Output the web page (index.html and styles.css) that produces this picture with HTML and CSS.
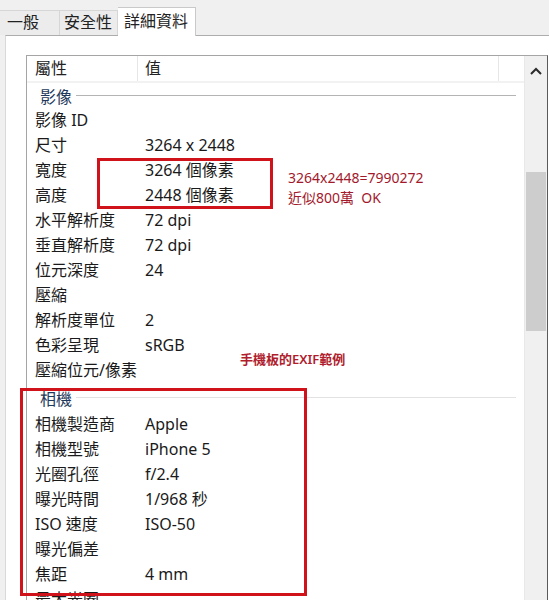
FILE: index.html
```html
<!DOCTYPE html>
<html lang="zh-Hant">

<head>
    <meta charset="UTF-8">
    <meta name="viewport" content="width=device-width, initial-scale=1.0">
    <title>內容</title>
    <link rel="stylesheet" href="styles.css">
</head>

<body>

    <!-- 分頁 -->
    <div class="tabs">
        <div class="tab">一般</div>
        <div class="tab">安全性</div>
        <div class="tab active">詳細資料</div>
    </div>

    <div class="panel">
        <div class="list">
            <div class="list-body">
                <div class="head">
                    <div class="head-key">屬性</div>
                    <div class="head-val">值</div>
                    <div class="head-rest"></div>
                </div>

                <div class="group"><span>影像</span><i></i></div>
                <div class="row"><span class="key">影像 ID</span><span class="val"></span></div>
                <div class="row"><span class="key">尺寸</span><span class="val">3264 x 2448</span></div>
                <div class="row"><span class="key">寬度</span><span class="val">3264 個像素</span></div>
                <div class="row"><span class="key">高度</span><span class="val">2448 個像素</span></div>
                <div class="row"><span class="key">水平解析度</span><span class="val">72 dpi</span></div>
                <div class="row"><span class="key">垂直解析度</span><span class="val">72 dpi</span></div>
                <div class="row"><span class="key">位元深度</span><span class="val">24</span></div>
                <div class="row"><span class="key">壓縮</span><span class="val"></span></div>
                <div class="row"><span class="key">解析度單位</span><span class="val">2</span></div>
                <div class="row"><span class="key">色彩呈現</span><span class="val">sRGB</span></div>
                <div class="row"><span class="key">壓縮位元/像素</span><span class="val"></span></div>

                <div class="group group-tall"><span>相機</span><i></i></div>
                <div class="row"><span class="key">相機製造商</span><span class="val">Apple</span></div>
                <div class="row"><span class="key">相機型號</span><span class="val">iPhone 5</span></div>
                <div class="row"><span class="key">光圈孔徑</span><span class="val">f/2.4</span></div>
                <div class="row"><span class="key">曝光時間</span><span class="val">1/968 秒</span></div>
                <div class="row"><span class="key">ISO 速度</span><span class="val">ISO-50</span></div>
                <div class="row"><span class="key">曝光偏差</span><span class="val"></span></div>
                <div class="row"><span class="key">焦距</span><span class="val">4 mm</span></div>
                <div class="row"><span class="key">最大光圈</span><span class="val"></span></div>
            </div>

            <div class="scrollbar">
                <div class="arrow">
                    <svg width="12" height="8" viewBox="0 0 12 8"><path d="M1 7 L6 2 L11 7" fill="none" stroke="#2b2b2b" stroke-width="2"/></svg>
                </div>
                <div class="thumb"></div>
            </div>
        </div>
    </div>

    <!-- 註解 -->
    <div class="mark mark-size"></div>
    <div class="mark mark-camera"></div>
    <div class="note note-size">3264x2448=7990272<br>近似800萬&nbsp;&nbsp;OK</div>
    <div class="note note-exif">手機板的EXIF範例</div>

</body>

</html>
```

FILE: styles.css
```css
* {
    box-sizing: border-box;
}

body {
    margin: 0;
    height: 600px;
    overflow: hidden;
    background-color: #f0f0f0;
    font-family: "Noto Sans", "Noto Sans CJK TC", sans-serif;
    font-size: 16px;
    color: #1a1a1a;
}

/* 分頁 */
.tabs {
    display: flex;
    align-items: flex-end;
    height: 35px;
    position: relative;
    z-index: 2;
}

.tab {
    height: 25px;
    line-height: 22px;
    padding: 0 7px;
    background-color: #ececec;
    border: 1px solid #d6d6d6;
    border-bottom: none;
    color: #222;
    white-space: nowrap;
}

.tab:first-child {
    width: 60px;
    padding-left: 7px;
    border-left: none;
}

.tab:nth-child(2) {
    width: 58px;
    padding-left: 4px;
    padding-right: 0;
    border-left: none;
}

.tab.active {
    width: 78px;
    height: 29px;
    line-height: 26px;
    padding-left: 6px;
    padding-right: 0;
    background-color: #fff;
    border-color: #c9c9c9;
    border-left: none;
    margin-bottom: -1px;
}

.panel {
    margin-left: 5px;
    height: 565px;
    background-color: #fff;
    border-top: 1px solid #adadad;
    border-left: 1px solid #d9d9d9;
    padding: 19px 0 0 20px;
}

.list {
    display: flex;
    width: 522px;
    height: 560px;
    border-top: 1px solid #a5a5a5;
    border-left: 1px solid #a5a5a5;
    border-right: 1px solid #5a5a5a;
}

.list-body {
    flex: 1;
}

.head {
    display: flex;
    height: 27px;
    line-height: 25px;
    border-bottom: 2px solid #f2f2f2;
    color: #222;
}

.head-key {
    width: 111px;
    padding-left: 8px;
    border-right: 1px solid #e6e6e6;
}

.head-val {
    width: 361px;
    padding-left: 7px;
    border-right: 1px solid #e6e6e6;
}

.group {
    display: flex;
    align-items: center;
    height: 25px;
    padding: 0 8px 0 13px;
    color: #1e395b;
}

.group-tall {
    height: 29px;
}

.group i {
    flex: 1;
    height: 1px;
    margin-left: 4px;
    background-color: #b4b4b4;
    max-width: 441px;
}

.group-tall i {
    background-color: #e2e2e2;
}

.row {
    display: flex;
    height: 25px;
    line-height: 25px;
    padding-left: 8px;
}

.key {
    width: 110px;
    white-space: nowrap;
}

/* 捲軸 */
.scrollbar {
    width: 23px;
    background-color: #f0f0f0;
    border-left: 1px solid #e8e8e8;
}

.arrow {
    height: 29px;
    display: flex;
    justify-content: center;
    padding-top: 11px;
}

.thumb {
    margin: 87px 1px 0 1px;
    height: 159px;
    background-color: #cdcdcd;
}

/* 紅框與說明 */
.mark {
    position: absolute;
    border: 3px solid #d0121b;
}

.mark-size {
    left: 97px;
    top: 158px;
    width: 176px;
    height: 51px;
}

.mark-camera {
    left: 20px;
    top: 388px;
    width: 287px;
    height: 208px;
}

.note {
    position: absolute;
    color: #a3192c;
    font-size: 14px;
    line-height: 20px;
}

.note-size {
    left: 288px;
    top: 168px;
}

.note-exif {
    left: 240px;
    top: 349px;
    font-size: 13px;
    font-weight: 600;
    color: #b01e2e;
}
```
